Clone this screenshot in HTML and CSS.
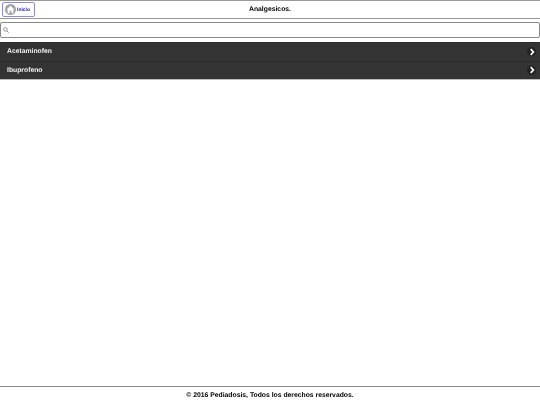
FILE: index.html
```html
<!DOCTYPE html>
<html lang="es">
<head>
    <meta charset="UTF-8">
    <title>Analgesicos.</title>
    <link rel="stylesheet" href="styles.css">
</head>
<body>
    <div class="page">
        <header class="header">
            <a class="home-btn" href="#">
                <span class="home-icon">
                    <svg width="11" height="11" viewBox="0 0 10 10">
                        <path d="M5 1.5 L8.6 5 H7.6 V8.5 H5.8 V6.2 H4.2 V8.5 H2.4 V5 H1.4 Z" fill="#fff"/>
                    </svg>
                </span>
                Inicio
            </a>
            <h1>Analgesicos.</h1>
        </header>

        <div class="search-box">
            <svg class="search-icon" width="6" height="6" viewBox="0 0 8 8">
                <circle cx="3.2" cy="3.2" r="2.4" fill="none" stroke="#777" stroke-width="1"/>
                <path d="M5 5 L7.5 7.5" stroke="#777" stroke-width="1.2"/>
            </svg>
            <input type="text" class="search-input">
        </div>

        <ul class="list">
            <li class="list-item">
                <span>Acetaminofen</span>
                <span class="arrow">
                    <svg width="8" height="8" viewBox="0 0 8 8">
                        <path d="M2.7 1.2 L5.4 4 L2.7 6.8" fill="none" stroke="#fff" stroke-width="1.7"/>
                    </svg>
                </span>
            </li>
            <li class="list-item">
                <span>Ibuprofeno</span>
                <span class="arrow">
                    <svg width="8" height="8" viewBox="0 0 8 8">
                        <path d="M2.7 1.2 L5.4 4 L2.7 6.8" fill="none" stroke="#fff" stroke-width="1.7"/>
                    </svg>
                </span>
            </li>
        </ul>

        <footer class="footer">© 2016 Pediadosis, Todos los derechos reservados.</footer>
    </div>
</body>
</html>
```

FILE: styles.css
```css
* {
    margin: 0;
    padding: 0;
    box-sizing: border-box;
    font-family: 'Liberation Sans', Arial, sans-serif;
    text-rendering: geometricPrecision;
}

body {
    background: #fff;
    color: #000;
}

.page {
    height: 405px;
    display: flex;
    flex-direction: column;
    overflow: hidden;
    will-change: transform;
}

/* barra superior */
.header {
    height: 19px;
    border-top: 1px solid #999;
    border-bottom: 1px solid #999;
    position: relative;
    display: flex;
    align-items: center;
    justify-content: center;
}

.header h1 {
    font-size: 6.8px;
    font-weight: bold;
}

.home-btn {
    position: absolute;
    top: 1px;
    left: 2px;
    width: 33px;
    height: 15px;
    display: flex;
    align-items: center;
    gap: 1px;
    padding-left: 2px;
    border: 1px solid #8c8cd2;
    border-radius: 2px;
    color: #2222b4;
    font-size: 5px;
    font-weight: bold;
    text-decoration: none;
}

.home-icon {
    width: 11px;
    height: 11px;
    border-radius: 50%;
    background: #a0a0a8;
    display: flex;
}

/* buscador */
.search-box {
    height: 16px;
    margin-top: 3px;
    border: 1px solid #888;
    border-radius: 2px;
    display: flex;
    align-items: center;
    padding-left: 2px;
    gap: 2px;
}

.search-input {
    flex: 1;
    border: none;
    outline: none;
    background: transparent;
}

/* lista */
.list {
    list-style: none;
    margin-top: 4px;
    border-bottom: 1px solid #bbb;
}

.list-item {
    height: 18.5px;
    background: #333;
    border-top: 1px solid #2a2a2a;
    color: #f2f2f2;
    font-size: 6.8px;
    font-weight: bold;
    display: flex;
    align-items: center;
    justify-content: space-between;
    padding: 0 4px 0 7px;
}

.arrow {
    width: 9px;
    height: 9px;
    border-radius: 50%;
    background: #222;
    display: flex;
    align-items: center;
    justify-content: center;
}

.footer {
    margin-top: auto;
    height: 19px;
    border-top: 1px solid #888;
    font-size: 6.8px;
    font-weight: bold;
    text-align: center;
    padding-top: 5px;
}
```
